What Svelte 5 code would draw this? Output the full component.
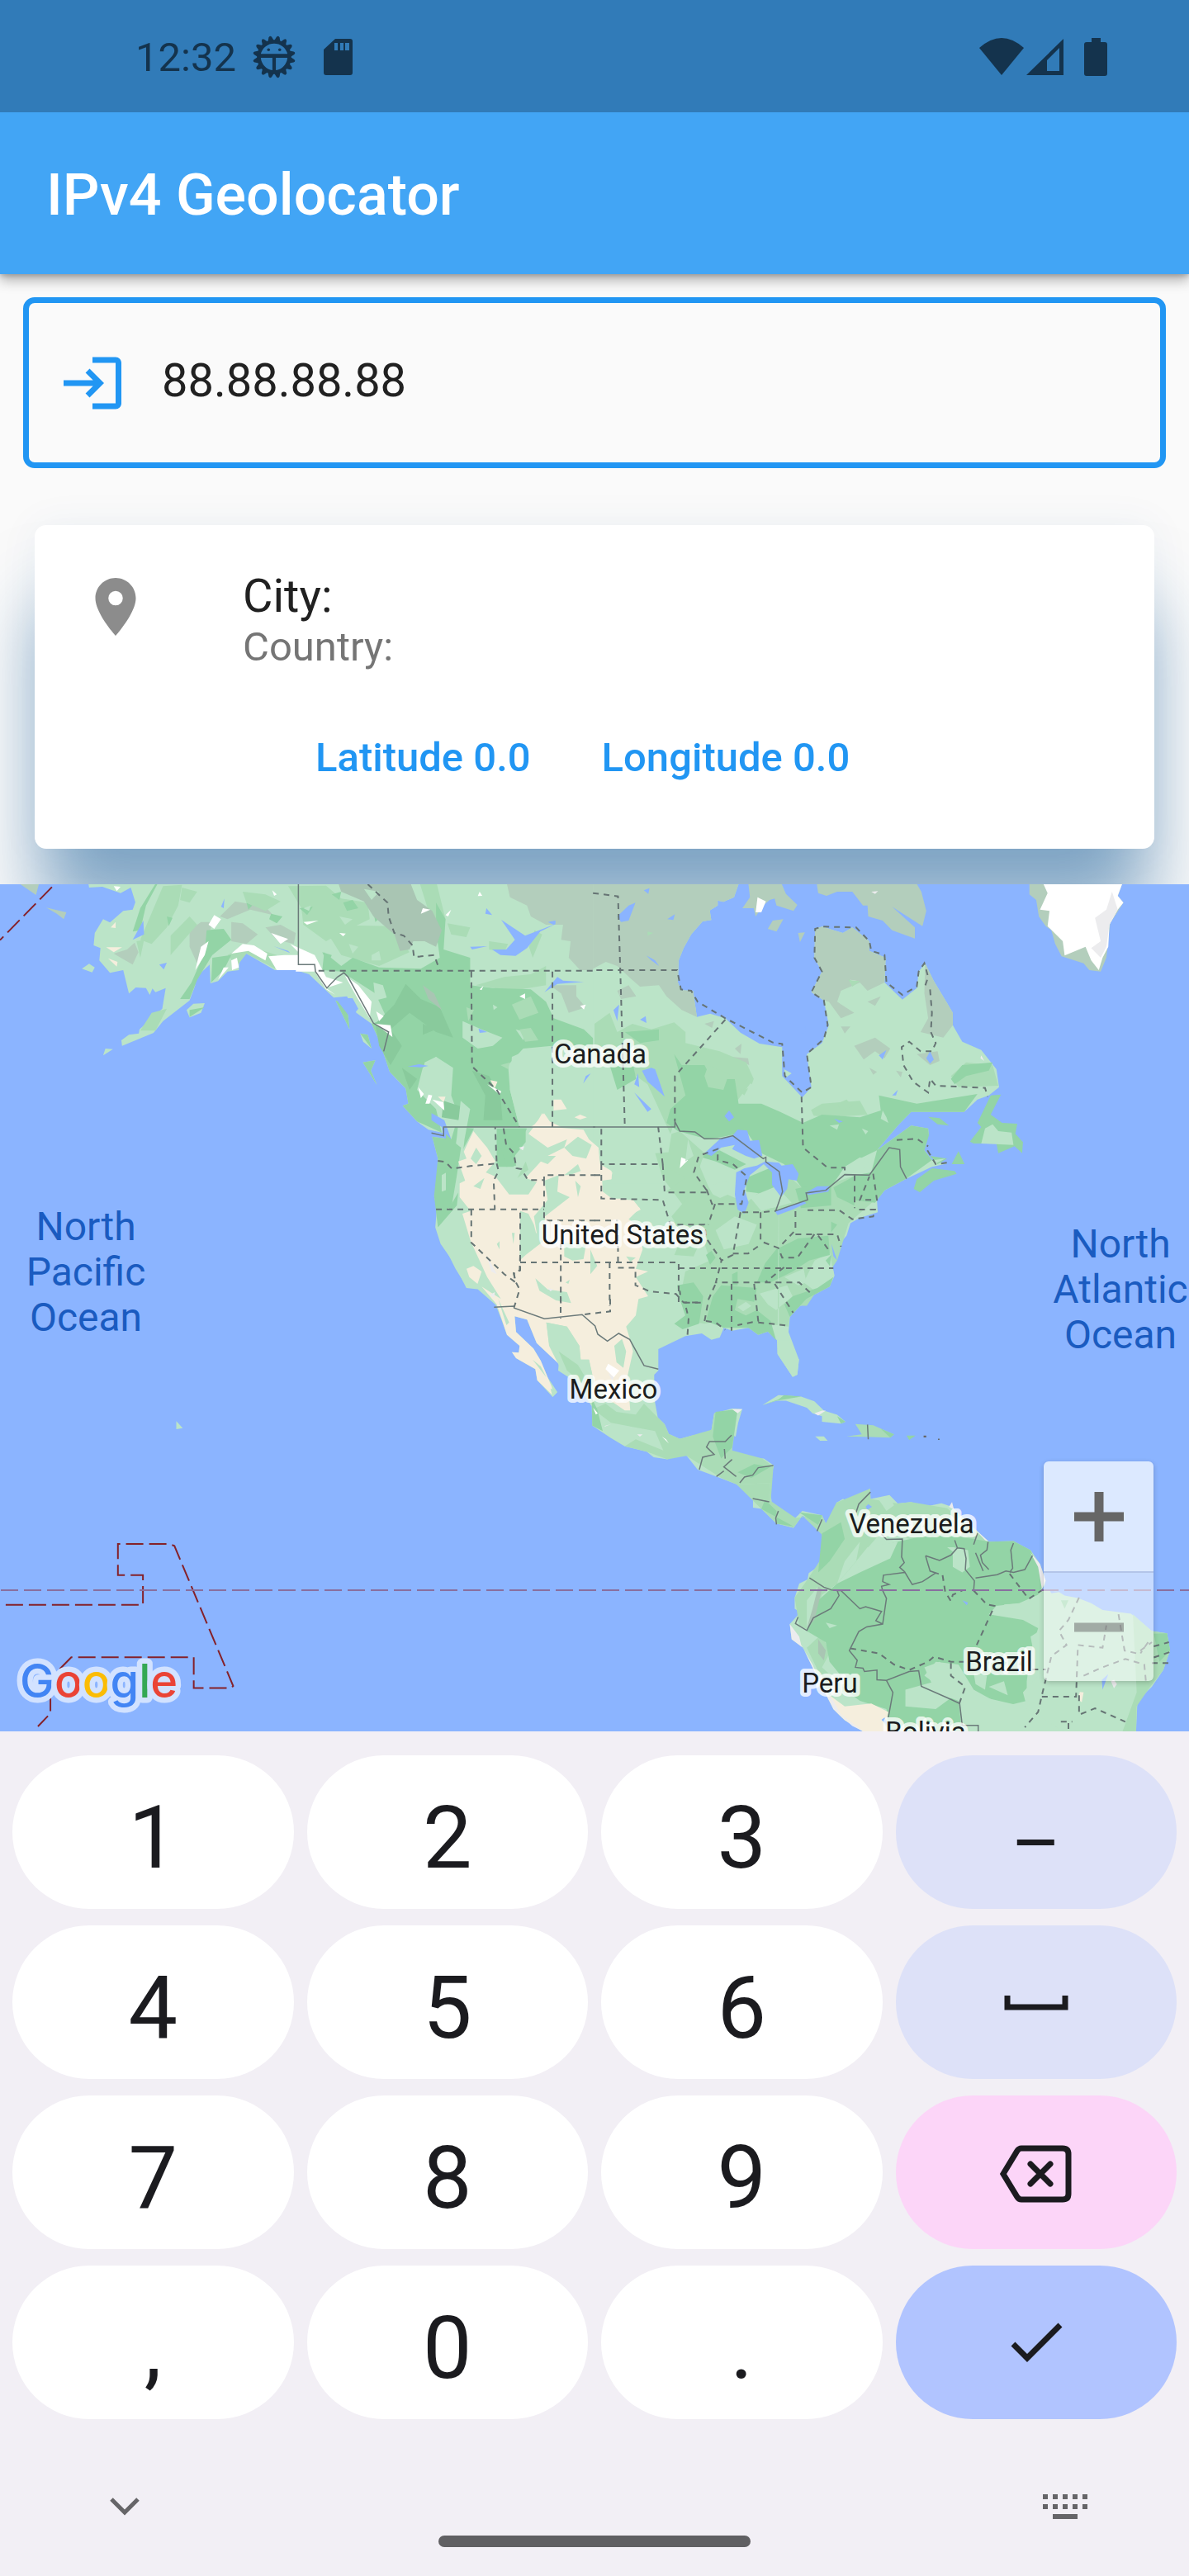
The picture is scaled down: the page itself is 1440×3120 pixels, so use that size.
<script>
  let address = $state('88.88.88.88');
  const digits = [
    ['1', '2', '3', '–'],
    ['4', '5', '6', 'space'],
    ['7', '8', '9', 'delete'],
    [',', '0', '.', 'done']
  ];
  const tones = { '–': 'soft', space: 'soft', delete: 'pink', done: 'blue' };

  function press(key) {
    if (key === 'delete') address = address.slice(0, -1);
    else if (key === 'space') address += ' ';
    else if (key !== 'done') address += key;
  }

  const gear = Array.from({ length: 16 }, (_, i) => i * 22.5);

  // Each sheet of the map has its own survey grid, placed on the map by its transform.
  const sheets = [
    {
      place: 'translate(0 -11) scale(.4592 .3333)',
      layers: [
        ['land', 'M232 20L235 45 270 42 318 65 345 45 357 98 350 125 325 130 290 172 272 160 250 210 247 255 265 265 262 310 290 355 325 345 340 430 358 408 385 410 395 435 402 412 410 425 437 410 428 485 368 560 366 575 340 580 320 600 322 620 405 573 430 530 500 455 515 400 510 380 553 325 555 393 575 385 600 350 630 345 632 300 650 285 725 345 780 345 815 360 880 445 915 440 940 500 980 540 1000 600 1028 715 1045 740 1070 775 1077 830 1062 838 1100 895 1130 925 1165 935 1190 960 1140 950 1155 1030 1152 1130 1145 1165 1152 1215 1148 1280 1162 1340 1195 1405 1230 1500 1260 1505 1310 1565H1570V20ZM885 455L915 470 922 560ZM950 575L970 580 980 630 958 605ZM957 680L990 673 978 710 994 762ZM216 340L235 322 250 335 243 353ZM492 490L510 467 540 465 530 500 500 517ZM272 655L278 630 298 632Z'],
        ['tundra', 'M122 118L175 135 168 160 150 140ZM40 20H105L95 72ZM1335 20H1570V345L1530 345 1500 300 1505 240 1480 235 1485 180 1440 180 1400 150 1390 110 1345 80ZM500 200L530 170 560 170 545 250 520 320 500 260ZM610 170L640 175 680 215 650 250 610 240ZM700 190L740 180 780 210 775 250 730 235ZM300 285L335 270 355 245 365 280 350 325 325 305ZM580 150L620 95 700 115 720 145 660 125 600 160ZM1450 400L1520 400 1520 440 1545 480 1500 500 1480 430Z'],
        ['mid', 'M430 40L480 35 470 110 440 190 400 250 370 235ZM480 45L520 60 500 100 475 90ZM760 40L860 38 900 85 970 100 975 160 900 210 860 240 800 180 795 120ZM850 180L1030 185 1080 280 1000 330 900 290ZM640 60L700 70 740 95 700 130 650 100ZM1105 20H1150L1175 160 1165 240 1130 130ZM400 500L440 485 410 565 370 565ZM450 220L500 150 520 180 450 290ZM1180 175L1240 190 1230 225 1190 215ZM1255 400L1330 370 1400 360 1440 330 1440 400 1350 420ZM1340 490L1410 450 1410 510 1360 520ZM600 290L650 255 730 290 725 340 650 285 625 330ZM1290 240L1340 250 1330 280 1290 270ZM1410 200L1430 215 1405 300 1395 260ZM360 240L380 235 370 300Z'],
        ['dark', 'M415 20H420L385 110 370 200 350 205 370 120ZM545 200L590 195 610 235 560 290 520 380 500 450 475 450 505 390 540 280ZM1150 100L1175 160 1170 270 1240 300 1240 345H1240V400L1300 410 1400 415 1440 460 1460 520 1540 560 1570 600V640L1500 650 1455 620 1380 630 1340 690 1345 780 1370 915 1220 915 1190 800 1195 700 1150 660 1115 700 1100 780 1150 850 1165 935 1100 895 1062 838 1077 830 1070 775 1028 715 1000 600 980 540 1020 520 990 430 900 350 850 345 855 280 900 330 930 300 1000 335 1110 340 1160 300 1150 200ZM885 455L915 470 922 560ZM957 680L990 673 978 710 994 762ZM950 575L970 580 980 630ZM1140 950L1190 960 1200 915 1250 920 1220 1000 1205 1200 1155 1280 1145 1165 1155 1030ZM1310 920H1390L1360 1000 1355 1060 1310 1060ZM500 490L540 480 500 515ZM560 300L610 290 590 345 557 390ZM715 140L745 150 730 175 710 160ZM850 280L875 290 865 325ZM790 120L825 115 810 145ZM905 100L930 90 945 120 915 130ZM985 135L1005 150 990 170ZM875 70L900 60 895 90ZM650 100L665 110 655 125ZM440 150L455 155 445 185Z'],
        ['deep', 'M1070 395L1110 450 1160 480 1195 590 1150 570 1080 500 1030 560 1060 620 1030 690 1000 620 990 540 1040 470ZM1245 710L1290 730 1320 800 1325 890 1275 890 1280 800ZM1170 820L1215 840 1210 890 1165 880ZM1060 700L1100 740 1080 780ZM1115 540L1150 560 1115 580Z'],
        ['stone', 'M890 20H1080L1100 90 1140 130 1165 200 1150 260 1120 240 1090 240 1080 270 1055 275 1040 215 985 150 960 95 900 60ZM1115 400L1145 430 1165 490 1130 450Z'],
        ['land', 'M1350 660L1400 630 1570 640V915H1370L1345 780ZM1120 680L1150 660 1175 700 1190 780 1150 800 1110 760ZM1220 530L1270 560 1325 590 1300 620 1260 630 1220 590ZM980 290L1000 275 1005 310 980 310ZM1360 560L1385 570 1380 600ZM1215 820L1240 850 1225 960 1210 1150 1180 1220 1190 1100 1205 950ZM920 250L945 260 930 285ZM960 50L1000 60 980 90ZM1165 1090L1190 1070 1185 1140 1165 1150ZM985 390L1010 400 1020 445 990 455ZM1300 470L1312 480 1302 490ZM800 120L820 110 815 130ZM895 150L930 160 910 180Z'],
        ['mid', 'M1350 470L1400 440 1420 500 1370 525ZM1370 560L1400 555 1420 600 1385 605ZM1230 480L1250 490 1235 530ZM1320 690L1345 680 1340 705Z'],
        ['sand', 'M280 262L322 262 300 280ZM285 302L310 315 308 332ZM1460 815L1480 815 1495 850 1460 855ZM1515 880L1530 870 1548 880 1530 888ZM1155 805L1175 805 1170 825ZM1293 745L1312 750 1305 775ZM1410 905L1435 865 1450 895 1480 915H1400ZM292 190L305 170 305 192Z'],
        ['ice', 'M550 180L565 145 583 160 565 195ZM515 345L530 260 550 240 540 290ZM575 380L590 335 603 335ZM610 310L625 300 630 335 612 345ZM610 285L640 250 670 255 705 285 700 310 655 275ZM708 295L750 290 790 290 785 345H730ZM715 210L760 232 740 250ZM765 250L830 290 860 370 905 390 860 410 885 435 860 415 830 350 780 350 787 280ZM910 365L945 400 980 460 975 520 940 440ZM992 495L1012 512 1000 530ZM990 540L1030 545 1035 588ZM1103 770L1118 795 1110 810ZM1122 830L1130 797 1140 800 1133 830ZM1140 815L1170 825 1172 855ZM1285 760L1322 785 1318 797ZM718 55L730 70 723 75ZM1115 120L1135 125 1110 140ZM1265 60L1272 75 1260 76ZM1370 440L1385 430 1385 450ZM895 210L912 212 905 222ZM1175 145L1190 125 1182 150ZM800 170L840 165 810 180ZM1530 475L1545 470 1540 488ZM1265 415L1275 403 1270 418ZM300 40L318 42 308 58Z'],
        ['water', 'M1322 162L1385 220 1460 180 1445 170 1465 165 1465 178 1425 205 1390 265 1360 293 1320 290 1298 270 1335 270 1358 235ZM1240 260L1285 258 1245 270ZM1283 120L1298 145 1280 140ZM1436 425L1470 370 1485 383 1540 388 1470 395ZM1262 557L1285 570 1265 573ZM1075 695L1105 687 1130 693 1110 698ZM1538 757L1545 730 1558 720ZM1138 865L1172 890 1190 960 1168 940 1165 915 1138 890ZM722 258L760 275 765 283ZM350 235L378 165 380 215ZM420 325L440 318 432 343ZM583 115L592 85 590 120ZM885 448L930 447 945 485 925 520Z']
      ],
      borders: [
        ['line', 'M787 20V325H830L832 350 862 410 890 370 907 355 918 370 985 538 1025 570 1012 640M1138 937L1170 947V915H1570'],
        ['dash', 'M970 33L1022 100 1025 150 1040 210 1065 220 1088 255 1092 298 1145 290 1160 347M840 347H1570M1243 350L1245 695 1310 780 1370 915M1457 350V915M1155 1038L1175 1042 1192 1067 1240 1057 1310 1048 1306 915M1328 920L1335 980 1355 1010 1362 1065 1375 1068 1392 1108H1435V1090H1570M1435 1108V1255H1570M1310 1048L1315 1075 1302 1110 1305 1213M1150 1214H1435M1243 1216V1335L1330 1450 1360 1480 1355 1445 1372 1435V1216M1372 1407H1570M1479 1340V1570'],
        ['route', 'M137 43L0 236']
      ]
    },
    {
      place: 'translate(720 -11) scale(.4592 .3333)',
      layers: [
        ['land', 'M-4 20H383L368 80 340 97 325 92 325 110 304 128 308 163 285 168 255 215 235 265 222 310 220 390 228 418 260 420 270 515 305 503 345 520 385 572 435 612 495 625 495 730 548 808 572 770 560 650 600 610 618 545 605 455 572 425 600 350 580 300 582 195 600 187 655 210 680 190 725 240 725 275 768 300 765 390 812 452 850 410 855 350 872 320 895 385 930 465 945 500 945 545 970 605 1020 635 1060 705 1067 770 1040 800 1010 815 975 860 835 860 800 910 745 1000 790 955 835 910 880 920 882 945 860 970 870 1000 890 1035 930 1048 890 1060 820 1105 765 1145 745 1180 747 1225 700 1245 675 1265 665 1310 640 1350 633 1390 620 1370 633 1455 625 1480 585 1515 545 1565H-4Z'],
        ['tundra', 'M-4 20H383L368 80 340 97 325 92 325 110 304 128 308 163 285 168 255 215 235 265 222 310 220 390 228 418 260 420 270 515 230 490 190 440 170 400 120 405 95 375 60 330 30 315-4 340ZM572 425L600 350 580 300 582 195 600 187 655 210 680 190 725 240 725 275 768 300 765 390 720 420 700 390 650 420 640 460 685 500 650 520 618 460 605 455ZM872 320L895 385 930 465 945 500 945 545 920 590 860 570 880 520 870 430ZM585 20H845L862 60 875 130 865 185 785 115 845 190 845 230 785 200 760 165 722 150 720 110 708 110 680 60 640 60 612 75 590 65ZM405 20H490L505 68 535 108 525 130 480 110 475 85 462 90 445 110 425 150 420 120 390 120 410 80ZM470 165L498 160 480 205 457 195ZM537 210L555 208 542 243ZM685 620L740 590 780 630 765 665 740 640 710 670ZM360 660L405 665 408 690ZM370 630L388 612 385 650ZM850 650L905 640 910 675 885 690ZM1147 20H1395L1380 75 1395 100 1360 175 1350 300 1335 350 1305 345 1290 320 1232 295 1215 250 1205 200 1190 185 1172 150 1165 90 1147 70ZM60 420L90 400 110 440 70 450ZM290 540L315 530 310 555ZM725 700L745 715 735 725ZM795 710L812 715 808 735ZM650 550L675 550 660 575ZM720 460L755 440 740 475Z'],
        ['ice', 'M1180 20H1395L1380 75 1395 100 1380 125 1358 180 1355 260 1340 300 1330 345 1310 310 1295 260 1240 292 1235 240 1195 185 1200 130 1175 125 1195 65ZM430 80L452 95 440 135 425 135Z'],
        ['snow', 'M1365 60L1350 125 1320 155 1335 240 1310 265 1335 300 1350 260 1358 180 1380 125ZM980 710L1000 700 990 725ZM730 60L748 58 740 68ZM675 380L695 385 680 395ZM150 570L180 560 165 572ZM1020 655L1028 675 1018 665Z'],
        ['mid', 'M0 540L40 500 60 570 100 540 150 560 210 535 240 570 240 610 330 640 400 680 420 740 360 850 230 830 200 940 140 760 100 720 40 700 0 660ZM550 870L600 830 700 820 720 870 620 880ZM940 730L980 680 1050 690 1065 765 960 770ZM160 1010L260 1000 300 1130 400 1190 500 1080 560 1150 690 1090 740 1180 670 1265 640 1400 560 1565H230L200 1270 250 1230 180 1100ZM670 380L700 385 680 405ZM405 750L420 740 415 760ZM140 205L155 210 140 220Z'],
        ['dark', 'M210 650L230 690 290 690 310 740 370 740 380 830 440 830 490 860 550 900 600 870 700 880 755 855 750 800 850 830 1010 795 975 860 835 860 800 910 745 1000 700 1030 660 1060 640 1100 620 1140 560 1160 500 1050 440 1010 400 930 360 945 300 960 220 930 190 900 200 850 240 800ZM745 1000L790 955 835 910 880 920 882 945 870 1000 890 1035 820 1105 765 1145 740 1190 680 1180 640 1130 690 1090 730 1080ZM270 1020L330 1000 400 1050 370 1070 320 1040ZM40 690L100 680 110 740 60 780ZM80 570L170 560 170 600 120 610ZM970 690L1050 680 1040 710 980 730 950 760 940 740ZM400 1100L470 1060 490 1120 460 1160 400 1150ZM630 1135L690 1090 685 1200 640 1170ZM500 1330L580 1230 640 1270 560 1410 450 1470 440 1430ZM210 1480L270 1480 300 1560H220ZM310 1490H420L480 1560H310ZM1072 797L1045 870 1075 900 1115 903 1110 940 1130 970 1128 1010 1108 985 1065 1010 1060 975 1000 975 990 968 1020 915 1010 900 1045 800ZM842 1140L850 1105 890 1065 950 1075 955 1085 895 1110 858 1152ZM942 1050L960 1003 976 1050ZM885 1020L930 1030 905 1050ZM880 878L910 883 935 910 905 905Z'],
        ['land', 'M1020 975L1030 920 1050 905 1065 930 1100 935 1105 980ZM660 1060L700 1025 725 1040 700 1080ZM895 1035L925 1030 900 1048ZM410 1170L480 1130 520 1190 440 1220ZM300 1130L350 1110 370 1150 320 1180ZM0 1120H185L200 1270 60 1210 0 1240ZM350 1240L390 1230 430 1320 370 1360ZM540 880L570 850 580 880 550 895ZM760 855L770 880 775 900 755 885ZM520 720L500 705 505 735ZM620 910L645 905 640 925ZM705 920L722 930 715 942Z'],
        ['mid', 'M290 730L300 690 350 720 375 740 350 740 340 780 300 770ZM380 780L405 775 395 800ZM640 830L665 815 680 840 650 855Z'],
        ['sand', 'M0 980L10 1000 15 1050 45 1075 45 1105 0 1110ZM0 1175L80 1175 120 1210 90 1250 130 1290 125 1340 65 1360 110 1410 150 1450 130 1510 50 1565H0Z'],
        ['water', 'M60 150L90 110 108 100 90 165 70 170ZM192 160L212 142 208 163ZM137 292L160 310 170 330 150 310ZM130 55L145 47 142 68ZM50 490L65 470 60 530ZM120 525L135 512 137 537ZM125 710L150 700 160 705 185 805 140 750ZM105 790L150 850 140 860ZM105 760L115 720 118 770ZM343 875L355 855 368 880 355 895ZM750 655L770 635 760 670ZM875 665L885 640 895 670 885 685ZM632 885L655 895 645 900ZM545 575L557 545 555 575ZM785 800L800 780 795 800ZM570 1470L595 1520 580 1510ZM625 1340L640 1400 630 1385Z']
      ],
      borders: [
        ['line', 'M-4 915H212V895L225 930 265 933 290 958 335 957 365 947 445 1030 452 1025V1042L487 1077 496 1150 478 1220 562 1180 558 1155 610 1145 660 1088 725 1090 777 990 805 997 807 1060 823 1103'],
        ['dash', 'M-4 65L62 77 68 345 80 915M5 345H218L228 415 255 420 272 460 345 520 470 608 495 613 502 730 548 790 572 770 560 650 605 595 615 545 605 455 572 425 600 350 580 300 582 195 600 187 690 190 725 240 730 275 765 290 770 390 812 435 850 405 855 350 870 320 880 370 870 410M345 525L212 730V895M546 805L550 990 615 1063H660V1088M885 415L890 500 887 570 900 610 890 640 860 640 830 605 810 625 815 690 840 750 880 790 885 740 900 765 1030 773 1037 805M797 962L850 958 880 985M878 1000L900 1050 930 1045M18 922V1050H180L168 915M180 1050L185 1153H300L262 1080 275 1020 325 995 325 1035 365 1050 402 1095 388 1195H310L295 1140M18 1050V1175L180 1180 200 1270H290L295 1320 335 1400 320 1480H540L575 1525M0 1407H222V1565M222 1428H630M40 1407V1565M62 1407V1255M62 1427H108V1490L145 1512 215 1522 235 1553H280M0 1090H18M0 1255H62M318 1195L300 1270M385 1225L365 1380M438 1225V1330L485 1355 530 1290V1205M390 1225H438L478 1220M562 1217H645L680 1250 735 1240 740 1215H690M686 1090V1210M735 1085L745 1180H700L725 1095M530 1305H640L650 1350M580 1305L535 1390H495L485 1355M365 1375H405L435 1345M365 1380L335 1400M590 1310L622 1370M500 1425L450 1480']
      ]
    },
    {
      place: 'translate(540 269) scale(.3333)',
      layers: [
        ['land', 'M0 520L35 590 75 655 130 665 175 705 200 770 222 830 268 870 265 895 240 893 255 915 325 955 332 995 388 1056 405 1038 370 985 345 925 318 880 255 820 250 763 295 775 330 860 410 935 408 960 470 1000 530 1090 532 1160 600 1205 650 1235 730 1255 755 1275 805 1283 845 1262 875 1270 915 1320 1000 1352 1060 1375 1115 1425 1185 1445 1175 1370 1192 1305 1155 1280 1060 1280 1020 1275 1040 1255 1040 1195 1053 1200 1062 1150 1077 1100 1040 1098 975 1115 965 1175 930 1195 900 1195 850 1208 810 1190 795 1155 770 1130 757 1060 757 975 772 960 772 882 870 835 930 825 965 848 995 840 1010 805 1040 815 1100 805 1135 830 1170 818 1203 850 1205 900 1260 983 1277 975 1283 920 1245 820 1250 765 1310 700 1395 655 1410 610 1395 530V470H0Z'],
        ['mid', 'M820 100L850 90 940 170 915 240 950 310 1050 360 1120 390 1180 370 1280 380 1400 380V530L1340 560 1300 640 1340 670 1250 760 1245 800 1130 785 1040 800 1000 780 940 790 880 780 850 700 870 600 960 560 920 440 850 450 820 400 880 330 800 310 870 260 800 220ZM535 1100L580 1080 620 1110 690 1120 720 1080 770 1130 795 1155 810 1190 850 1208 965 1175 975 1115 1060 1100 1040 1250 1150 1280 1190 1310 1180 1440 1060 1375 1000 1350 875 1270 805 1283 730 1255 650 1235 690 1210 790 1250 760 1180 600 1150Z'],
        ['dark', 'M1160 570L1200 520 1280 480 1390 470 1395 540 1320 560 1260 600 1180 640 1130 640ZM840 650L900 640 935 690 920 790 860 810 830 790 870 760 850 700ZM970 690L1000 650 1130 660 1120 710 1060 700 1050 740 1090 760 1130 740 1180 780 1200 850 1170 818 1135 830 1100 805 1010 805 945 780ZM945 540L965 525 980 550 960 575ZM1250 765L1310 700 1395 655 1408 620 1350 660 1260 690 1230 720ZM980 1110L1060 1100 1040 1240 1000 1280 970 1200ZM0 100L30 130 55 150 40 250 20 370 0 370ZM215 80H290V130L250 180 255 215 220 220 200 150ZM480 960L530 1060 532 1160 570 1180 550 1100ZM1270 300L1400 270 1400 360 1290 370ZM1060 1330L1120 1300 1180 1310 1110 1350ZM1380 560L1400 540 1395 580ZM1040 610L1060 600 1060 650 1040 650Z'],
        ['sand', 'M330 60L350 25 385 75 500 85 520 120 555 150 560 240 605 240 600 265 568 270 570 310 610 340 680 340 708 375 640 410 700 430 715 520 690 590 735 600 690 620 735 690 700 700 690 760 655 800 670 850 680 890 660 980 670 1105 650 1105 600 1070 540 1010 520 920 490 920 485 870 440 800 365 785 375 860 410 910 410 935 330 860 295 775 250 763 255 820 318 880 345 925 370 985 385 1020 388 1050 332 995 325 955 255 915 240 893 265 895 268 870 222 830 185 720 130 655 200 700 150 620 90 490 60 390 90 380 50 330 50 280 70 270 45 200 75 190 65 165 100 90 150 150 180 200 145 240 180 255 230 320 300 320 330 275 290 260 345 200 370 210 400 180 370 180 430 150 440 120 370 150 300 100ZM75 590L100 580 130 600 115 645 85 620Z'],
        ['land', 'M358 270L410 250 405 310 450 330 360 400 355 490 290 540 280 500 330 460 320 400 370 340ZM430 495L510 500 500 555 460 560 430 545ZM325 625L370 665 440 675 455 715 400 705 340 670ZM365 785L440 800 485 870 490 920 520 920 540 1010 470 990 410 940 375 870ZM612 870L640 845 655 890 645 950 620 930ZM430 150L480 110 530 140 510 190 460 180ZM525 520L550 580 525 610ZM470 270L490 290 480 330ZM185 500L195 490 195 520ZM110 150L130 180 110 210 90 190ZM190 700L230 785 220 795ZM315 920L345 945 365 985ZM380 1025L388 1056 405 1038ZM655 545L690 550 670 565ZM240 460L250 460 245 500ZM435 640L450 630 445 645ZM430 250L455 230 480 210 490 235 450 250ZM270 380L300 390 320 430 330 470 290 540 268 560ZM100 290L140 260 125 300Z'],
        ['ice', 'M590 935L630 960 610 985 580 955ZM535 1095L552 1115 545 1120ZM800 1210L785 1200 810 1225ZM855 185L880 195 850 225Z'],
        ['snow', 'M150 545L185 610 165 600ZM265 150L285 145 280 160ZM160 685L178 675 175 695ZM1040 1100L1077 1100 1060 1115ZM580 1160L600 1155 575 1165ZM695 1192L715 1192 705 1200ZM370 660L390 665 380 672ZM590 970L610 985 605 995Z'],
        ['mid', 'M410 890L480 940 510 990 500 1010 440 960ZM290 200L300 230 260 260ZM830 540L900 545 920 500 860 470Z'],
        ['land', 'M1140 680L1240 650 1260 690 1200 740 1170 720ZM980 450L1050 400 1130 430 1100 500 1010 520ZM1210 200L1205 900 1260 983 1277 975 1283 920 1245 850 1210 850ZM1230 620L1300 590 1310 640 1280 650ZM880 120L900 180 870 200ZM1060 730L1090 710 1110 725 1080 745Z'],
        ['water', 'M940 170L1000 115 1040 108 1060 85 1095 88 1105 125 1138 122 1150 180 1120 190 1090 180 1040 155 1050 140 1000 150 965 180ZM1050 320L1055 240 1085 225 1130 215 1160 200 1210 205 1220 215 1260 210 1282 245 1275 270 1245 265 1240 300 1218 330 1185 285 1185 240 1155 210 1105 250 1085 300 1100 350 1085 390 1060 375ZM1195 380L1300 345 1310 352 1260 375 1205 395ZM1305 315L1350 290 1395 290 1390 310 1320 322Z']
      ],
      borders: [
        ['line', 'M175 730L247 726 248 733 358 772 495 757 542 798 552 828 587 853 628 825 668 847 720 942 772 955M1038 1195L1015 1218H958L947 1238 975 1265 933 1275 921 1320M1012 1245L1015 1280M1040 1283L1010 1310 1055 1345M1010 1325L983 1345M1190 1305L1135 1313 1115 1340 1085 1347 1068 1368M1115 1425L1175 1437'],
        ['dash', 'M270 540L268 600 247 607 252 635 268 665 248 730M417 690V770M597 700V745L495 757M878 830L882 770 868 713H935M850 670L852 685M940 780L955 700 980 645M1120 645L1135 780 1060 795M945 780L980 785 1015 812M1038 645V815M1135 785L1245 797M1195 645L1262 750']
      ]
    },
    {
      place: 'translate(720 509) scale(.4592 .338)',
      layers: [
        ['land', 'M418 728V692L375 645 463 640 460 700 500 745 530 765 548 740 600 755 610 785 637 750 638 710 655 697 675 705 727 660 728 697 778 683 800 713 835 708 870 725 915 712 943 725 1000 800 1040 850 1105 848 1150 880 1175 930 1190 990 1185 1020 1225 1030 1240 1043 1275 1052 1310 1070 1340 1095 1415 1108 1470 1170 1510 1178 1518 1240 1500 1310 1470 1370 1432 1420 1428 1540H720L660 1490 630 1450 600 1370 575 1300 550 1230 520 1200 515 1145 543 1103 528 1090 528 1050 540 1000 562 985 565 962 595 935 603 900 600 825 585 780 548 757 525 800 480 785 440 732ZM443 360L485 325 545 330 580 347 605 380 640 395 662 420 650 427 600 420 600 400 575 390 560 370 505 345 480 345ZM582 473H605L615 488H595Z'],
        ['mid', 'M375 645L463 640 460 700 530 765 600 755 610 785 638 710 727 660 728 697 800 713 835 708 930 730 1000 810 1040 850 900 870 760 810 640 1000 600 1040 570 1170 540 1150 528 1050 562 985 603 900 600 825 548 757 525 800 480 785 440 732ZM688 428L735 433 790 465 780 477 730 475 665 473 705 465ZM600 1180L620 1250 600 1300 680 1400 610 1370 560 1230ZM1420 1110L1470 1170 1510 1178 1518 1240 1500 1310 1460 1380 1430 1440 1428 1540H1390L1430 1390Z'],
        ['dark', 'M640 1000L700 960 740 870 800 850 900 820 1000 840 1040 850 1105 848 1150 880 1190 990 1170 1040 1120 1070 1060 1080 1040 1110 1130 1130 1170 1160 1150 1250 1140 1350 1140 1420 1080 1440 1000 1380 960 1290 900 1280 870 1330 960 1420 970 1540H780L770 1450 700 1420 680 1400 650 1330 620 1280 610 1210 560 1170 590 1060ZM600 820L650 780 660 840 620 920 590 960ZM443 360L485 340 500 325 545 330 480 345ZM823 470H847L830 485ZM755 445L790 465 780 477ZM450 700L480 740 480 785 525 795 440 732ZM540 745L600 755 590 790ZM1475 1180L1510 1178 1518 1240 1490 1280ZM640 400L662 420 650 427ZM1230 1060L1250 1060 1240 1090Z'],
        ['land', 'M690 920L720 870 800 850 780 910 700 960ZM945 870L985 880 990 940 970 960 945 940ZM930 870L950 870 945 885ZM610 1140L640 1150 620 1160ZM820 1380L900 1350 940 1410 900 1450 820 1440ZM870 1300L910 1280 970 1350 960 1420 900 1390ZM1150 1190L1185 1160 1190 1400 1140 1440 1130 1390 1170 1330ZM1040 1370L1080 1350 1090 1400ZM970 1390L1130 1440 1250 1540H980ZM560 1060L590 1010 580 1120 560 1160ZM660 920L700 850 690 920 640 1000ZM1080 1075L1130 1070 1090 1090ZM750 700L780 690 790 720 770 740ZM1000 1320L1035 1330 1030 1380 1005 1360Z'],
        ['stone', 'M590 1010L600 1020 580 1130 560 1160 575 1090ZM590 1200L610 1240 605 1275 590 1250Z'],
        ['sand', 'M620 1400L660 1440 730 1430 775 1460 770 1490 760 1490 780 1540H720L660 1490 630 1450ZM1280 1388L1290 1390 1285 1425 1275 1415Z'],
        ['snow', 'M515 1145L540 1190 545 1220 575 1290 600 1370 630 1420 650 1470 710 1530 680 1510 630 1450 600 1370 575 1300 550 1230 520 1200ZM600 380L610 380 590 398 580 390ZM935 725L943 708 948 735ZM1362 1350L1370 1345 1378 1360 1370 1375ZM1000 800L1040 850 1030 845ZM1150 890L1175 930 1190 990 1180 1020 1170 940Z'],
        ['water', 'M715 725L722 715 732 725 720 735ZM970 1060L985 1068 982 1078ZM1190 1000L1180 1020 1225 1030 1205 1035ZM1340 1380L1338 1345 1355 1325ZM757 1488L765 1480 775 1510Z']
      ],
      borders: [
        ['line', 'M600 770L587 812M485 740L478 765 480 788M720 430L722 483M728 672L697 715 690 745M755 820L770 842 812 840 810 905 817 925 805 942 818 958 838 1003 865 993 900 962 908 965M818 960L762 970 760 993 777 1003 757 1010 760 1025 770 1053 760 1145 718 1155 697 1172 672 1240 693 1275 688 1300 708 1303 712 1315 745 1310V1345L770 1347 830 1315 855 1312 862 1368 940 1415 963 1430 970 1510M770 1347L787 1390 775 1480M567 980L605 1013 625 1023 650 1025 700 1090 715 1083 757 1100 742 1133 760 1145M640 1025L645 1043 623 1090 577 1123 560 1168 530 1143 537 1120M873 900L885 955 908 965M873 900L910 917 940 898 957 872 950 845M957 872L975 875 980 910 978 950 1002 990 1000 1025M1010 820L1000 860M1038 850L1035 880 1018 898 1023 925 1040 950M1005 890L1025 955M1105 855L1098 880 1103 945 1095 960M1155 900L1135 950 1105 960 1085 955 1062 968 1005 980M970 1508H1012V1540'],
        ['dash', 'M918 970L925 1030 940 1063 945 1040 970 1025M1000 1025L1035 1075 1055 1080 1008 1220M1095 965L1145 1055 1190 1015M675 1232L750 1250 790 1290 830 1310 880 1280 895 1262 940 1280H975M940 1285V1330L978 1370 962 1430M1278 1050L1250 1130 1225 1170 1245 1220 1205 1260 1180 1400 1170 1460 1135 1515M1155 1308H1190M1180 1405H1270L1275 1220 1340 1230 1350 1150M1278 1400V1470L1320 1447 1400 1495M1230 1495H1260M1250 1500V1535M1382 1110L1398 1240 1430 1250 1470 1210M1290 1330L1340 1300 1400 1270 1450 1290 1455 1360M1460 1210L1440 1250M1475 1225L1515 1210M1475 1265L1518 1245M1470 1285H1515'],
        ['dot', 'M868 470H875V476H868ZM906 481H910V485H906Z']
      ]
    },
    {
      place: 'translate(0 509) scale(.4592 .338)',
      layers: [['land', 'M465 418L482 443 465 447Z']],
      borders: [['route', 'M15 1076H377V970H311V858H447L460 865 615 1367 610 1374H511V1264H188L133 1340V1465L100 1512']]
    }
  ];

  const places = [
    ['Canada', 727, 217],
    ['United States', 754, 436],
    ['Mexico', 743, 623],
    ['Venezuela', 1104, 786],
    ['Brazil', 1210, 953],
    ['Peru', 1005, 979],
    ['Bolivia', 1121, 1038]
  ];
  const oceans = [
    [104, 431, ['North', 'Pacific', 'Ocean']],
    [1357, 452, ['North', 'Atlantic', 'Ocean']]
  ];
</script>

<div class="screen">
  <header>
    <div class="status">
      <time>12:32</time>
      <svg class="debug" viewBox="-25 -25 50 50" aria-hidden="true">
        {#each gear as a}
          <path d="M-3.5-19L-1.8-23.5Q0-26 1.8-23.5L3.5-19Z" transform="rotate({a + 11.25})" />
        {/each}
        <path fill-rule="evenodd" d="M0-20A20 20 0 1 1 0 20A20 20 0 1 1 0-20ZM-15.5-3.5H15.5A16 16 0 0 0-15.5-3.5ZM-15.5 1A16 16 0 0 0-2 15.5V1ZM15.5 1A16 16 0 0 1 2 15.5V1Z" />
        <circle cx="-6.5" cy="-8.5" r="1.7" /><circle cx="6.5" cy="-8.5" r="1.7" />
      </svg>
      <svg class="sd" viewBox="0 0 36 46" aria-hidden="true">
        <path fill-rule="evenodd" d="M14 1H32Q35 1 35 4V42Q35 45 32 45H3Q0 45 0 42V14ZM13 6V15H17V6ZM20 6V15H24V6ZM26 6V15H31V6Z" />
      </svg>
      <svg class="signals" viewBox="0 0 156 46" aria-hidden="true">
        <path d="M0 12Q27-12 54 12L27 45Z" />
        <path fill-rule="evenodd" d="M102 1V45H57ZM97 12L82 27V40H97Z" />
        <path d="M136 0H147V5H152Q155 5 155 8V43Q155 46 152 46H130Q127 46 127 43V8Q127 5 130 5H136Z" />
      </svg>
    </div>
    <h1>IPv4 Geolocator</h1>
  </header>

  <main>
    <label class="field">
      <svg viewBox="0 0 24 24" aria-hidden="true"><path d="M11 7L9.6 8.4l2.6 2.6H2v2h10.2l-2.6 2.6L11 17l5-5zM20 19h-8v2h8c1.1 0 2-.9 2-2V5c0-1.1-.9-2-2-2h-8v2h8z" /></svg>
      <input type="text" inputmode="decimal" aria-label="IPv4 address" bind:value={address} />
    </label>

    <section class="card">
      <div class="place">
        <svg viewBox="0 0 24 24" aria-hidden="true"><path d="M12 2C8.13 2 5 5.13 5 9c0 5.25 7 13 7 13s7-7.75 7-13c0-3.87-3.13-7-7-7zm0 9.5a2.5 2.5 0 1 1 0-5 2.5 2.5 0 0 1 0 5z" /></svg>
        <div>
          <p class="city">City:</p>
          <p class="country">Country:</p>
        </div>
      </div>
      <div class="coords">
        <button type="button">Latitude 0.0</button>
        <button type="button">Longitude 0.0</button>
      </div>
    </section>
  </main>

  <section class="map" aria-label="Map">
    <svg class="chart" viewBox="0 0 1440 1026">
      {#each sheets as sheet}
        <g transform={sheet.place}>
          {#each sheet.layers as [kind, d]}<path class={kind} {d} />{/each}
        </g>
      {/each}
      {#each sheets as sheet}
        <g transform={sheet.place}>
          {#each sheet.borders as [kind, d]}<path class={kind} {d} />{/each}
        </g>
      {/each}
      <path class="equator" d="M1 855H1440" />
      {#each places as [name, x, y]}<text class="name" {x} {y}>{name}</text>{/each}
      {#each oceans as [x, y, words]}
        <text class="ocean" {x} {y}>
          {#each words as word, i}<tspan {x} dy={i ? 55 : 0}>{word}</tspan>{/each}
        </text>
      {/each}
      <text class="google" x="24" y="985"><tspan class="b">G</tspan><tspan class="r">o</tspan><tspan class="y">o</tspan><tspan class="b">g</tspan><tspan class="g">l</tspan><tspan class="r">e</tspan></text>
    </svg>
    <div class="zoom">
      <button type="button" aria-label="Zoom in"><svg viewBox="0 0 60 60"><path d="M0 30H60M30 0V60" /></svg></button>
      <button type="button" aria-label="Zoom out" class="out"><svg viewBox="0 0 60 60"><path d="M0 30H60" /></svg></button>
    </div>
  </section>

  <section class="keyboard" aria-label="Keyboard">
    <div class="keys">
      {#each digits.flat() as key}
        <button type="button" class="key {tones[key] ?? ''}" aria-label={key} onclick={() => press(key)}>
          {#if key === 'space'}
            <svg viewBox="0 0 90 72"><path d="M10 27V41H80V27" /></svg>
          {:else if key === 'delete'}
            <svg viewBox="0 0 90 72"><path d="M27 5H77Q84 5 84 12V60Q84 67 77 67H27Q24 67 22 64L5 36 22 8Q24 5 27 5Z" /><path class="cross" d="M38 24L62 48M62 24L38 48" /></svg>
          {:else if key === 'done'}
            <svg viewBox="0 0 90 72"><path d="M17 36L34 53 74 13" /></svg>
          {:else}{key}{/if}
        </button>
      {/each}
    </div>
    <div class="tools">
      <button type="button" aria-label="Hide keyboard"><svg viewBox="0 0 44 32"><path d="M6 7L22 23 38 7" fill="none" stroke="#666568" stroke-width="5" /></svg></button>
      <button type="button" aria-label="Switch keyboard"><svg class="board" viewBox="0 0 54 30"><path fill="#666568" d="M0 0h6v6H0zM12 0h6v6h-6zM24 0h6v6h-6zM36 0h6v6h-6zM48 0h6v6h-6zM0 12h6v6H0zM12 12h6v6h-6zM24 12h6v6h-6zM36 12h6v6h-6zM48 12h6v6h-6zM12 24h30v6H12z" /></svg></button>
    </div>
    <div class="home"></div>
  </section>
</div>

<style>
  :global(body) { margin: 0; background: #f2eff5; }
  .screen { font-family: Roboto, sans-serif; background: #fafafa; color: #212121; }
  button { border: 0; padding: 0; background: none; font: inherit; color: inherit; cursor: pointer; }
  svg { display: block; }

  header { position: relative; z-index: 2; background: #42a5f5; box-shadow: 0 8px 14px rgba(0, 0, 0, .28), 0 2px 6px rgba(0, 0, 0, .2); }
  .status { display: flex; align-items: center; box-sizing: border-box; height: 136px; padding: 2px 98px 0 164px; background: #317bb8; color: #14334d; fill: #14334d; }
  time { font-size: 49px; }
  .debug { width: 52px; height: 52px; margin-left: 20px; }
  .sd { width: 36px; height: 46px; margin-left: 34px; }
  .signals { width: 156px; height: 46px; margin-left: auto; }
  h1 { margin: 0; padding: 4px 56px 0; font-size: 70px; font-weight: 500; line-height: 192px; color: #fff; }

  main { padding: 28px 28px 43px; }
  .field { display: flex; align-items: center; gap: 42px; box-sizing: border-box; height: 207px; padding: 0 35px; border: 7px solid #2196f3; border-radius: 14px; }
  .field svg { flex: none; width: 84px; height: 84px; fill: #2196f3; }
  .field input { flex: 1; min-width: 0; padding: 0 0 6px; border: 0; outline: 0; background: none; font: 56px Roboto, sans-serif; color: #212121; }

  .card { position: relative; margin: 69px 14px 0; padding: 48px 56px 54px; box-sizing: border-box; min-height: 392px; background: #fff; border-radius: 14px; box-shadow: 0 90px 90px -8px rgba(20, 90, 150, .52), 0 0 50px rgba(20, 90, 150, .06); }
  .place { display: flex; gap: 112px; }
  .place svg { flex: none; width: 84px; height: 84px; margin-top: 9px; fill: #8c8c8c; }
  p { margin: 0; }
  .city { font-size: 56px; line-height: 76px; }
  .country { font-size: 49px; line-height: 48px; color: #757575; }
  .coords { display: flex; gap: 86px; padding: 80px 0 0 284px; font-size: 49px; font-weight: 500; line-height: 60px; color: #2196f3; }

  .map { position: relative; z-index: 1; overflow: hidden; background: #8bb4ff; }
  .chart { width: 100%; height: auto; }
  .land { fill: #bbe4c8; }
  .mid { fill: #aadcb6; }
  .dark { fill: #93d4a6; }
  .deep { fill: #89ca9c; }
  .tundra { fill: #b3cebc; }
  .stone { fill: #a9c5b3; }
  .sand { fill: #f5eedd; }
  .ice { fill: #fff; }
  .snow { fill: #ececee; }
  .water { fill: #8bb4ff; }
  .dot { fill: #666; }
  .line, .dash, .route, .equator { fill: none; vector-effect: non-scaling-stroke; }
  .line { stroke: #6b7a7a; stroke-width: 1.5; }
  .dash { stroke: #667474; stroke-width: 2; stroke-dasharray: 7 6; }
  .route { stroke: #852129; stroke-width: 2; stroke-dasharray: 21 7; }
  .equator { stroke: #896f9f; stroke-width: 2; stroke-dasharray: 21 7; }
  .name { font-size: 33px; text-anchor: middle; fill: #1b1d1e; stroke: rgba(255, 255, 255, .75); stroke-width: 10px; stroke-linejoin: round; paint-order: stroke; }
  .ocean { font-size: 48px; text-anchor: middle; fill: #1a5bc0; }
  .google { font-family: Inter, sans-serif; font-size: 56px; font-weight: 500; stroke: #d2e2ff; stroke-width: 13px; stroke-linejoin: round; paint-order: stroke; }
  .b { fill: #4285f4; }
  .r { fill: #ea4335; }
  .y { fill: #fbbc05; }
  .g { fill: #34a853; }

  .zoom { position: absolute; right: 43px; bottom: 61px; width: 133px; border-radius: 6px; overflow: hidden; box-shadow: 0 2px 6px rgba(0, 0, 0, .2); }
  .zoom button { display: grid; place-items: center; width: 100%; height: 133px; background: rgba(255, 255, 255, .7); }
  .zoom .out { background: rgba(255, 255, 255, .52); border-top: 2px solid rgba(150, 165, 200, .4); }
  .zoom svg { width: 60px; height: 60px; stroke: #666; stroke-width: 11; }
  .zoom .out svg { opacity: .5; }

  .keyboard { background: #f2eff5; padding: 29px 15px 35px; }
  .keys { display: grid; grid-template-columns: repeat(4, 1fr); gap: 20px 16px; }
  .key { display: grid; place-items: center; height: 186px; padding-top: 14px; border-radius: 93px; background: #fff; color: #1b1b1f; font-size: 106px; line-height: 124px; }
  .key svg { width: 90px; height: 72px; fill: none; stroke: #1b1b1f; stroke-width: 7; margin-bottom: 10px; }
  .key .cross { stroke-linecap: round; }
  .soft { padding-top: 30px; background: #dde1f8; font-size: 92px; }
  .soft svg { margin-bottom: 28px; }
  .pink { background: #fcd5f8; }
  .blue { background: #b1c4ff; }
  .tools { display: flex; justify-content: space-between; align-items: center; height: 52px; margin-top: 80px; padding: 0 108px 0 114px; }
  .tools svg { width: 44px; height: 32px; }
  .tools .board { width: 54px; height: 30px; }
  .home { width: 378px; height: 14px; margin: 9px auto 0; border-radius: 7px; background: #605f62; }
</style>
